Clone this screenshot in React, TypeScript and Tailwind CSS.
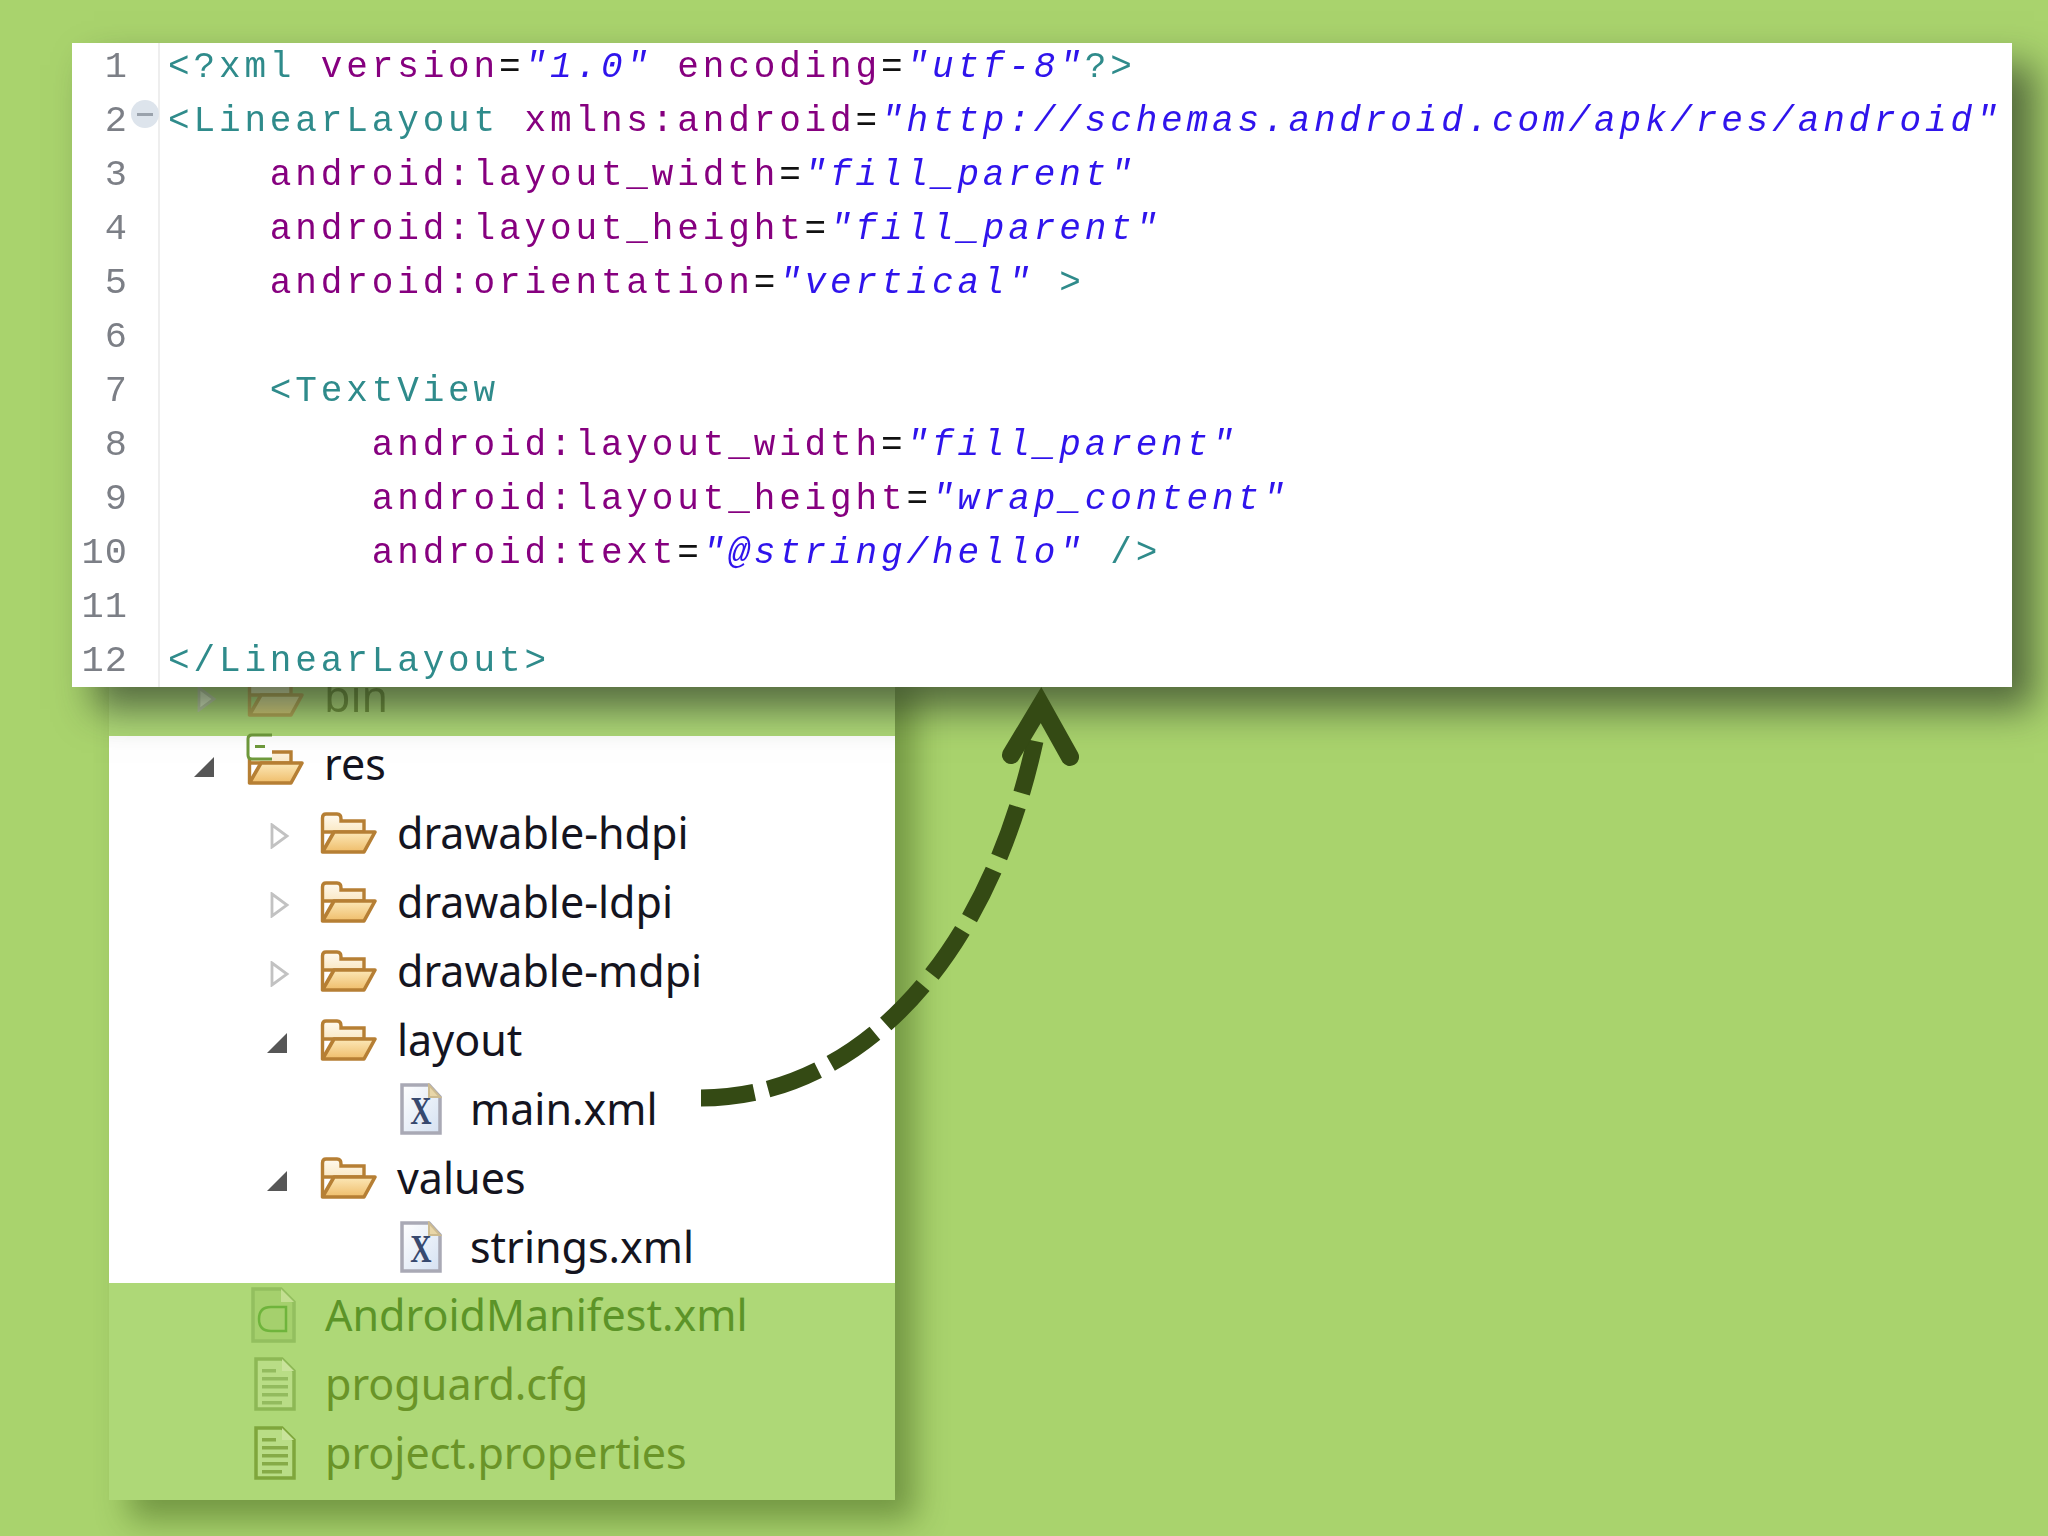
import React, { useId } from "react";

type Tok = [string, string];
const T = "text-[#2f8b8b]";
const A = "text-[#86007f]";
const V = "text-[#2f14ec] italic";
const E = "text-[#111111]";

const lines: { indent: string; toks: Tok[] }[] = [
  { indent: "", toks: [[T, "<?xml"], [A, " version"], [E, "="], [V, '"1.0"'], [A, " encoding"], [E, "="], [V, '"utf-8"'], [T, "?>"]] },
  { indent: "", toks: [[T, "<LinearLayout"], [A, " xmlns:android"], [E, "="], [V, '"http://schemas.android.com/apk/res/android"']] },
  { indent: "    ", toks: [[A, "android:layout_width"], [E, "="], [V, '"fill_parent"']] },
  { indent: "    ", toks: [[A, "android:layout_height"], [E, "="], [V, '"fill_parent"']] },
  { indent: "    ", toks: [[A, "android:orientation"], [E, "="], [V, '"vertical"'], [T, " >"]] },
  { indent: "", toks: [] },
  { indent: "    ", toks: [[T, "<TextView"]] },
  { indent: "        ", toks: [[A, "android:layout_width"], [E, "="], [V, '"fill_parent"']] },
  { indent: "        ", toks: [[A, "android:layout_height"], [E, "="], [V, '"wrap_content"']] },
  { indent: "        ", toks: [[A, "android:text"], [E, "="], [V, '"@string/hello"'], [T, " />"]] },
  { indent: "", toks: [] },
  { indent: "", toks: [[T, "</LinearLayout>"]] },
];

function Folder() {
  const id = useId();
  return (
    <svg width="57" height="42" viewBox="0 0 57 42" className="shrink-0">
      <defs>
        <linearGradient id={id + "b"} x1="0" y1="0" x2="0" y2="1">
          <stop offset="0" stopColor="#fffaf0" />
          <stop offset="1" stopColor="#f5d596" />
        </linearGradient>
        <linearGradient id={id + "f"} x1="0" y1="0" x2="0" y2="1">
          <stop offset="0" stopColor="#fce8b8" />
          <stop offset="1" stopColor="#efbd6a" />
        </linearGradient>
      </defs>
      <path d="M2.5 39V6Q2.5 2 6 2H17Q21 2 21 7V9H44V20H2.5Z" fill={`url(#${id}b)`} stroke="#b67f34" strokeWidth="3.4" />
      <path d="M2.5 40L14 20H55L44 40Z" fill={`url(#${id}f)`} stroke="#b67f34" strokeWidth="3.6" strokeLinejoin="round" />
    </svg>
  );
}

function XmlFile() {
  const id = useId();
  return (
    <svg width="42" height="52" viewBox="0 0 42 52" className="shrink-0">
      <defs>
        <linearGradient id={id} x1="0" y1="0" x2="1" y2="1">
          <stop offset="0" stopColor="#ffffff" />
          <stop offset="1" stopColor="#d5e1f2" />
        </linearGradient>
      </defs>
      <path d="M2 2H29L40 14V50H2Z" fill={`url(#${id})`} stroke="#a9a9b5" strokeWidth="3.5" />
      <path d="M29 2V14H40Z" fill="#e8d6a8" stroke="#cdbb90" strokeWidth="2" />
      <text x="0" y="0" transform="translate(21 41) scale(0.72 1)" textAnchor="middle" fontFamily="'Liberation Serif', serif" fontWeight="700" fontSize="41" fill="#37496f">X</text>
    </svg>
  );
}

function ManifestFile() {
  return (
    <svg width="45" height="56" viewBox="0 0 45 56" className="shrink-0">
      <path d="M2 2H30L43 15V54H2Z" fill="#a5d06d" stroke="#93bf5f" strokeWidth="3.5" />
      <path d="M30 2V15H43Z" fill="#c3df91" />
      <path d="M35 20H20Q8 20 8 32Q8 44 20 44H35Z" fill="none" stroke="#6fb43c" strokeWidth="2.5" />
    </svg>
  );
}

function DocFile({ dark }: { dark?: boolean }) {
  const c = dark ? "#7fa63c" : "#8db855";
  const bar = dark ? "#86ab47" : "#93bb5e";
  return (
    <svg width="42" height="54" viewBox="0 0 42 54" className="shrink-0">
      <path d="M2 2H28L40 14V52H2Z" fill="#b9dd86" stroke={c} strokeWidth="3.5" />
      <path d="M28 2V14H40Z" fill="#c9e39b" />
      <rect x="8" y="12" width="14" height="3.5" fill={bar} />
      <rect x="8" y="20" width="26" height="3.5" fill={bar} />
      <rect x="8" y="28" width="26" height="3.5" fill={bar} />
      <rect x="8" y="36" width="26" height="3.5" fill={bar} />
      <rect x="8" y="44" width="20" height="3.5" fill={bar} />
    </svg>
  );
}

function Collapsed() {
  return (
    <svg width="20" height="26" viewBox="0 0 20 26" className="ml-[4px]">
      <path d="M2 2L17 13L2 24Z" fill="#ffffff" stroke="#c2c2c2" strokeWidth="2.8" />
    </svg>
  );
}

function Expanded() {
  return (
    <svg width="22" height="22" viewBox="0 0 22 22">
      <path d="M21 1V21H1Z" fill="#565656" />
    </svg>
  );
}

function Row({ pad, toggle, icon, gap, label, text }: { pad: string; toggle?: React.ReactNode; icon: React.ReactNode; gap: string; label: string; text: string }) {
  return (
    <div className={`flex h-[69px] shrink-0 items-center ${pad}`}>
      {toggle !== undefined && <div className="flex w-[54px] shrink-0 items-center pt-[6px]">{toggle}</div>}
      {icon}
      <span className={`${gap} whitespace-nowrap text-[43px] leading-[69px] ${text}`}>{label}</span>
    </div>
  );
}

export default function App() {
  const dark = "text-[#141420]";
  return (
    <div className="h-[1536px] w-[2048px] overflow-hidden bg-[#a9d36d] pt-[43px] [font-family:'Noto_Sans',sans-serif]">
      <div className="relative z-10 ml-[72px] flex h-[644px] w-[1940px] overflow-hidden bg-white shadow-[22px_22px_36px_rgba(30,40,30,0.62)] [font-family:'Liberation_Mono',monospace]">
        <div className="relative w-[88px] shrink-0 border-r-2 border-[#eeeeee] pr-[30px] text-right">
          <div className="-mt-[3px] blur-[0.5px]">
            {lines.map((_, i) => (
              <div key={i} className="h-[54px] text-[37px] leading-[54px] tracking-[1px] text-[#7c7f86]">{i + 1}</div>
            ))}
          </div>
          <div className="absolute left-[59px] top-[57px] flex h-[28px] w-[28px] items-center justify-center rounded-full bg-[#dde4ec]">
            <div className="h-[3px] w-[16px] bg-[#9aa2ac]" />
          </div>
        </div>
        <div className="-mt-[2px] pl-[8px] blur-[0.5px]">
          {lines.map((l, i) => (
            <div key={i} className="h-[54px] whitespace-pre text-[36px] leading-[54px] tracking-[3.86px]">
              {l.indent}
              {l.toks.map((t, j) => (
                <span key={j} className={t[0]}>{t[1]}</span>
              ))}
            </div>
          ))}
        </div>
      </div>

      <div className="relative -mt-[26px] ml-[109px] flex h-[839px] w-[786px] flex-col overflow-hidden bg-[#aed877] shadow-[20px_20px_30px_rgba(40,70,10,0.42)]">
        <div className="h-[75px] shrink-0 overflow-hidden opacity-55">
          <Row pad="pl-[84px]" toggle={<Collapsed />} icon={<Folder />} gap="ml-[20px]" label="bin" text="text-[#3d5a08]" />
        </div>
        <div className="h-[547px] shrink-0 bg-white">
          <div className="relative -mt-[7px]">
            <Row pad="pl-[84px]" toggle={<Expanded />} icon={<Folder />} gap="ml-[20px]" label="res" text={dark} />
            <svg width="28" height="28" viewBox="0 0 28 28" className="absolute left-[137px] top-[4px]">
              <path d="M26 2H6Q2 2 2 6V22Q2 26 6 26H26" fill="#ffffff" stroke="#6f9a3c" strokeWidth="3" />
              <rect x="9" y="12" width="10" height="3" fill="#6f9a3c" />
            </svg>
          </div>
          <Row pad="pl-[157px]" toggle={<Collapsed />} icon={<Folder />} gap="ml-[20px]" label="drawable-hdpi" text={dark} />
          <Row pad="pl-[157px]" toggle={<Collapsed />} icon={<Folder />} gap="ml-[20px]" label="drawable-ldpi" text={dark} />
          <Row pad="pl-[157px]" toggle={<Collapsed />} icon={<Folder />} gap="ml-[20px]" label="drawable-mdpi" text={dark} />
          <Row pad="pl-[157px]" toggle={<Expanded />} icon={<Folder />} gap="ml-[20px]" label="layout" text={dark} />
          <Row pad="pl-[291px]" icon={<XmlFile />} gap="ml-[28px]" label="main.xml" text={dark} />
          <Row pad="pl-[157px]" toggle={<Expanded />} icon={<Folder />} gap="ml-[20px]" label="values" text={dark} />
          <Row pad="pl-[291px]" icon={<XmlFile />} gap="ml-[28px]" label="strings.xml" text={dark} />
        </div>
        <div className="-mt-[3px] flex flex-col">
          <Row pad="pl-[142px]" icon={<ManifestFile />} gap="ml-[29px]" label="AndroidManifest.xml" text="text-[#5c9428]" />
          <Row pad="pl-[145px]" icon={<DocFile />} gap="ml-[29px]" label="proguard.cfg" text="text-[#6a9428]" />
          <Row pad="pl-[145px]" icon={<DocFile dark />} gap="ml-[29px]" label="project.properties" text="text-[#6a9428]" />
        </div>
      </div>

      <svg width="2048" height="1536" viewBox="0 0 2048 1536" className="absolute left-0 top-0 z-20">
        <path d="M701 1098C850 1098 985 970 1035 741" fill="none" stroke="#344a14" strokeWidth="17" pathLength="522" strokeDasharray="53 14" />
        <path d="M1011 755L1041 705L1070 757" fill="none" stroke="#344a14" strokeWidth="18" strokeLinecap="round" strokeLinejoin="miter" strokeMiterlimit="6" />
      </svg>
    </div>
  );
}
